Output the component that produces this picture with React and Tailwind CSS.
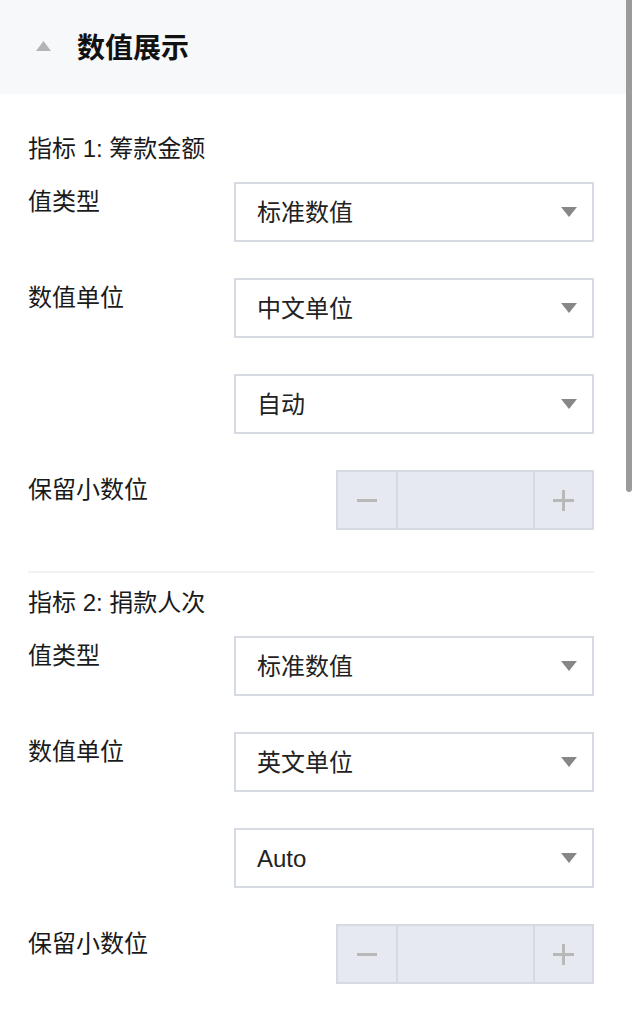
import React from 'react';

const FONT = { fontFamily: '"Liberation Sans", "Noto Sans CJK SC", sans-serif' };

const Caret = ({ className }) => (
    <svg width="16" height="10" viewBox="0 0 16 10" className={className}>
        <path d="M0 0 L16 0 L8 10 Z" fill="currentColor" />
    </svg>
);

const Select = ({ value }) => (
    <div className="w-[360px] h-[60px] border-2 border-[#d5dae3] bg-white flex items-center justify-between pl-[21px] pr-[15px]">
        <span className="text-[24px] text-[#222] leading-none mt-[2px]">{value}</span>
        <Caret className="text-[#878787]" />
    </div>
);

const Stepper = () => (
    <div className="w-[258px] h-[60px] border-2 border-[#d5dae3] bg-[#e6e9ef] flex">
        <div className="w-[60px] flex items-center justify-center border-r-2 border-[#d5dae3]">
            <div className="w-[20px] h-[3px] bg-[#b8b8b8]" />
        </div>
        <div className="flex-1" />
        <div className="w-[59px] flex items-center justify-center border-l-2 border-[#d5dae3]">
            <div className="relative w-[21px] h-[21px]">
                <div className="absolute left-0 top-[9px] w-[21px] h-[3px] bg-[#b8b8b8]" />
                <div className="absolute top-0 left-[9px] w-[3px] h-[21px] bg-[#b8b8b8]" />
            </div>
        </div>
    </div>
);

const Row = ({ label, children, right = false }) => (
    <div className="flex">
        <div className="w-[206px] shrink-0 text-[24px] leading-[40px] text-[#1a1a1a]">{label}</div>
        <div className={`flex-1 flex ${right ? 'justify-end' : ''}`}>{children}</div>
    </div>
);

const Metric = ({ title, unit, scale }) => (
    <div>
        <div className="text-[24px] leading-[40px] text-[#1a1a1a]">{title}</div>
        <div className="mt-[13px] flex flex-col gap-[36px]">
            <Row label="值类型"><Select value="标准数值" /></Row>
            <Row label="数值单位"><Select value={unit} /></Row>
            <Row label=""><Select value={scale} /></Row>
            <Row label="保留小数位" right><Stepper /></Row>
        </div>
    </div>
);

export default function App() {
    return (
        <div className="relative min-h-screen bg-white overflow-hidden" style={FONT}>
            {/* Header */}
            <div className="h-[94px] bg-[#f7f8fa] flex items-center pl-[36px]">
                <svg width="15" height="10" viewBox="0 0 15 10" className="text-[#b4b4b4] mb-[2px]">
                    <path d="M7.5 0 L15 10 L0 10 Z" fill="currentColor" />
                </svg>
                <h1 className="ml-[26px] mt-[4px] text-[28px] font-bold text-[#111] leading-none">数值展示</h1>
            </div>

            <div className="pl-[28px] pr-[38px]">
                <div className="pt-[35px] pb-[41px]">
                    <Metric title="指标 1: 筹款金额" unit="中文单位" scale="自动" />
                </div>
                <div className="h-[2px] bg-[#f2f2f2]" />
                <div className="pt-[10px] pb-[44px]">
                    <Metric title="指标 2: 捐款人次" unit="英文单位" scale="Auto" />
                </div>
            </div>

            {/* overlay scrollbar */}
            <div className="absolute top-0 right-0 w-[6px] h-[492px] bg-[#9b9b9b] rounded-b-full" />
        </div>
    );
}
